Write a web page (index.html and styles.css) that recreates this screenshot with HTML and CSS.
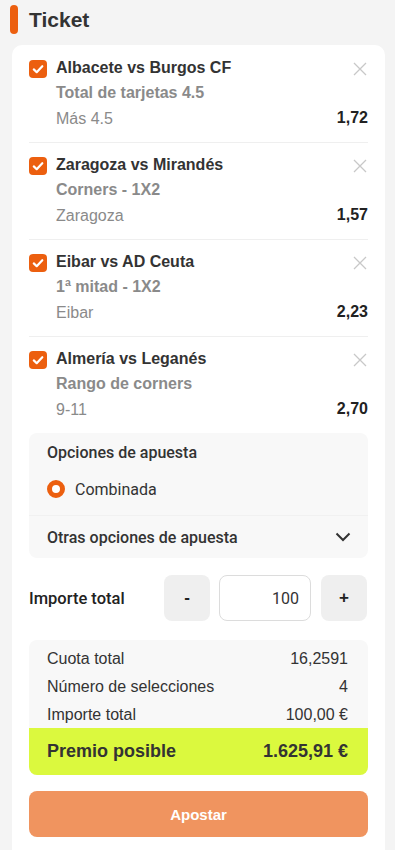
FILE: index.html
```html
<!DOCTYPE html>
<html lang="es">
<head>
<meta charset="utf-8">
<link rel="stylesheet" href="styles.css">
</head>
<body>
<div class="header"><span class="bar"></span><h1>Ticket</h1></div>
<div class="card">
  <div class="item">
    <span class="check"><svg viewBox="0 0 18 18" width="18" height="18"><path d="M4.8 9.4l2.9 2.8 5.6-6" fill="none" stroke="#fff" stroke-width="2.2" stroke-linecap="round" stroke-linejoin="round"/></svg></span>
    <div class="info">
      <div class="title">Albacete vs Burgos CF</div>
      <div class="market">Total de tarjetas 4.5</div>
      <div class="sel"><span>Más 4.5</span><span class="odd">1,72</span></div>
    </div>
    <svg class="close" viewBox="0 0 14 14" width="14" height="14"><path d="M1 1l12 12M13 1L1 13" stroke="#c8c8c8" stroke-width="1.3"/></svg>
  </div>
  <div class="item">
    <span class="check"><svg viewBox="0 0 18 18" width="18" height="18"><path d="M4.8 9.4l2.9 2.8 5.6-6" fill="none" stroke="#fff" stroke-width="2.2" stroke-linecap="round" stroke-linejoin="round"/></svg></span>
    <div class="info">
      <div class="title">Zaragoza vs Mirandés</div>
      <div class="market">Corners - 1X2</div>
      <div class="sel"><span>Zaragoza</span><span class="odd">1,57</span></div>
    </div>
    <svg class="close" viewBox="0 0 14 14" width="14" height="14"><path d="M1 1l12 12M13 1L1 13" stroke="#c8c8c8" stroke-width="1.3"/></svg>
  </div>
  <div class="item">
    <span class="check"><svg viewBox="0 0 18 18" width="18" height="18"><path d="M4.8 9.4l2.9 2.8 5.6-6" fill="none" stroke="#fff" stroke-width="2.2" stroke-linecap="round" stroke-linejoin="round"/></svg></span>
    <div class="info">
      <div class="title">Eibar vs AD Ceuta</div>
      <div class="market">1ª mitad - 1X2</div>
      <div class="sel"><span>Eibar</span><span class="odd">2,23</span></div>
    </div>
    <svg class="close" viewBox="0 0 14 14" width="14" height="14"><path d="M1 1l12 12M13 1L1 13" stroke="#c8c8c8" stroke-width="1.3"/></svg>
  </div>
  <div class="item last">
    <span class="check"><svg viewBox="0 0 18 18" width="18" height="18"><path d="M4.8 9.4l2.9 2.8 5.6-6" fill="none" stroke="#fff" stroke-width="2.2" stroke-linecap="round" stroke-linejoin="round"/></svg></span>
    <div class="info">
      <div class="title">Almería vs Leganés</div>
      <div class="market">Rango de corners</div>
      <div class="sel"><span>9-11</span><span class="odd">2,70</span></div>
    </div>
    <svg class="close" viewBox="0 0 14 14" width="14" height="14"><path d="M1 1l12 12M13 1L1 13" stroke="#c8c8c8" stroke-width="1.3"/></svg>
  </div>

  <div class="options">
    <div class="opt-top">
      <div class="opt-title">Opciones de apuesta</div>
      <div class="radio-row"><span class="radio"></span><span>Combinada</span></div>
    </div>
    <div class="opt-other">
      <span>Otras opciones de apuesta</span>
      <svg viewBox="0 0 16 10" width="16" height="10"><path d="M1.5 1.5l6.5 6.5 6.5-6.5" fill="none" stroke="#333" stroke-width="2"/></svg>
    </div>
  </div>

  <div class="amount">
    <span class="amount-label">Importe total</span>
    <div class="stepper">
      <span class="step">-</span>
      <span class="input">100</span>
      <span class="step">+</span>
    </div>
  </div>

  <div class="summary">
    <div class="row"><span>Cuota total</span><span>16,2591</span></div>
    <div class="row"><span>Número de selecciones</span><span>4</span></div>
    <div class="row"><span>Importe total</span><span>100,00 €</span></div>
    <div class="prize"><span>Premio posible</span><span>1.625,91 €</span></div>
  </div>

  <div class="bet">Apostar</div>
</div>
</body>
</html>
```
FILE: styles.css
```css
* { box-sizing: border-box; }
body {
  margin: 0;
  background: #f4f4f4;
  font-family: "Liberation Sans", Arial, sans-serif;
  color: #333;
  height: 850px;
  overflow: hidden;
}
.header {
  display: flex;
  align-items: center;
  height: 40px;
  padding: 0 0 0 10px;
}
.bar {
  width: 8px;
  height: 29px;
  border-radius: 4px;
  background: #ec5f0f;
  margin-right: 11px;
  margin-top: -1px;
}
.header h1 {
  margin: 0;
  font-size: 21px;
  font-weight: bold;
  color: #333;
  line-height: 24px;
}
.card {
  margin: 5px 10px 0 12px;
  background: #fff;
  border-radius: 10px;
  padding: 1px 17px 30px;
  min-height: 820px;
}
.item {
  position: relative;
  display: flex;
  align-items: flex-start;
  padding: 12px 0 13px;
  border-bottom: 1px solid #efefef;
}
.item.last { border-bottom: none; }
.check {
  width: 18px;
  height: 18px;
  border-radius: 4px;
  background: #ec5f0f;
  flex: none;
  margin-top: 2px;
  display: block;
}
.check svg { display: block; }
.info {
  flex: 1;
  margin-left: 9px;
}
.title {
  font-size: 16px;
  font-weight: bold;
  line-height: 20px;
  color: #333;
}
.market {
  font-size: 16px;
  font-weight: bold;
  line-height: 20px;
  color: #8a8a8a;
  margin-top: 5px;
}
.sel {
  display: flex;
  justify-content: space-between;
  align-items: flex-end;
  font-size: 16px;
  line-height: 20px;
  height: 20px;
  color: #8a8a8a;
  margin-top: 6px;
}
.odd {
  font-weight: bold;
  color: #222;
  line-height: 22px;
}
.item .close {
  display: block;
  position: absolute;
  right: 1px;
  top: 16px;
}
.options {
  background: #f8f8f8;
  border-radius: 8px;
  margin-top: 0;
  font-family: Roboto, "Liberation Sans", sans-serif;
}
.opt-top {
  padding: 10px 18px 16px;
  border-bottom: 1px solid #f1f1f1;
}
.opt-title {
  font-size: 16px;
  font-weight: 500;
  line-height: 20px;
  color: #333;
}
.radio-row {
  display: flex;
  align-items: center;
  margin-top: 16px;
  font-size: 16px;
  color: #333;
  height: 20px;
}
.radio {
  width: 18px;
  height: 18px;
  border-radius: 50%;
  border: 5px solid #ec5f0f;
  background: #fff;
  margin-right: 10px;
}
.opt-other {
  display: flex;
  justify-content: space-between;
  align-items: center;
  height: 42px;
  padding: 0 17px 0 18px;
  font-size: 16px;
  font-weight: 500;
  color: #333;
}
.opt-other svg { display: block; }
.amount {
  display: flex;
  align-items: center;
  justify-content: space-between;
  margin-top: 17px;
  font-family: Roboto, "Liberation Sans", sans-serif;
}
.amount-label {
  font-size: 16.5px;
  font-weight: 500;
  color: #222;
}
.stepper {
  display: flex;
  gap: 9px;
  margin-right: 1px;
}
.step {
  width: 46px;
  height: 46px;
  border-radius: 8px;
  background: #efefef;
  display: flex;
  align-items: center;
  justify-content: center;
  font-family: "Liberation Sans", Arial, sans-serif;
  font-weight: bold;
  font-size: 17px;
  color: #222;
}
.input {
  width: 92px;
  height: 46px;
  border: 1px solid #dcdcdc;
  border-radius: 8px;
  display: flex;
  align-items: center;
  justify-content: flex-end;
  padding-right: 11px;
  font-size: 16px;
  color: #333;
  margin-right: 1px;
}
.summary {
  margin-top: 19px;
  background: #f8f8f8;
  border-radius: 8px;
  padding-top: 5px;
  overflow: hidden;
}
.row {
  display: flex;
  justify-content: space-between;
  height: 28px;
  align-items: center;
  padding: 0 20px 0 18px;
  font-size: 16px;
  color: #333;
}
.prize {
  display: flex;
  justify-content: space-between;
  align-items: center;
  height: 47px;
  margin-top: -1px;
  padding: 0 20px 0 18px;
  background: #dbf93e;
  font-size: 18px;
  font-weight: bold;
  color: #333;
}
.bet {
  margin-top: 16px;
  height: 46px;
  border-radius: 8px;
  background: #f0945f;
  color: #fff;
  font-weight: bold;
  font-size: 15px;
  display: flex;
  align-items: center;
  justify-content: center;
}
```
